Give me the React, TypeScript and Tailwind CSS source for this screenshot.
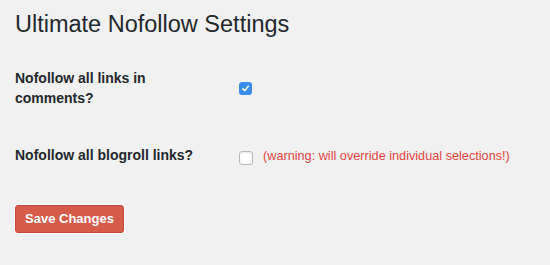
import { useState } from 'react';

function Checkbox({ checked, onChange }: { checked: boolean; onChange: (v: boolean) => void }) {
  return (
    <button
      type="button"
      role="checkbox"
      aria-checked={checked}
      onClick={() => onChange(!checked)}
      className={
        checked
          ? 'flex h-[13px] w-[13px] items-center justify-center rounded-[3px] bg-[#3b8ded]'
          : 'flex h-[14px] w-[14px] items-center justify-center rounded-[3px] border border-[#b4b9be] bg-white shadow-[inset_0_1px_2px_rgba(0,0,0,0.08)]'
      }
    >
      {checked && (
        <svg width="9" height="9" viewBox="0 0 10 10" fill="none">
          <path d="M2 5.4 4.1 7.5 8.2 2.4" stroke="white" strokeWidth="1.6" strokeLinecap="round" strokeLinejoin="round" />
        </svg>
      )}
    </button>
  );
}

export default function App() {
  const [comments, setComments] = useState(true);
  const [blogroll, setBlogroll] = useState(false);

  return (
    <div className="h-[265px] w-full bg-[#f1f1f1] pl-[15px] pt-[9px] font-['Liberation_Sans',Arial,sans-serif] text-[#23282d]">
      <h1 className="text-[23.5px] leading-[30px] font-normal">Ultimate Nofollow Settings</h1>

      {/* Settings rows */}
      <div className="mt-[29px] flex items-start">
        <div className="w-[190px] text-[14px] font-bold leading-[20px]">Nofollow all links in comments?</div>
        <div className="ml-[34px] mt-[14px]">
          <Checkbox checked={comments} onChange={setComments} />
        </div>
      </div>

      <div className="mt-[37px] flex items-start">
        <div className="w-[190px] text-[14px] font-bold leading-[20px]">Nofollow all blogroll links?</div>
        <div className="ml-[34px] mt-[6px]">
          <Checkbox checked={blogroll} onChange={setBlogroll} />
        </div>
        <span className="ml-[10px] mt-[3px] text-[12.7px] leading-[16px] text-[#e2463e]">
          (warning: will override individual selections!)
        </span>
      </div>

      <button
        type="button"
        className="mt-[40px] h-[28px] w-[109px] rounded-[3px] border border-[#c04a3c] bg-[#d65b4b] text-[13px] font-bold text-white shadow-[0_0_0_1px_rgba(255,255,255,0.7)]"
      >
        Save Changes
      </button>
    </div>
  );
}
